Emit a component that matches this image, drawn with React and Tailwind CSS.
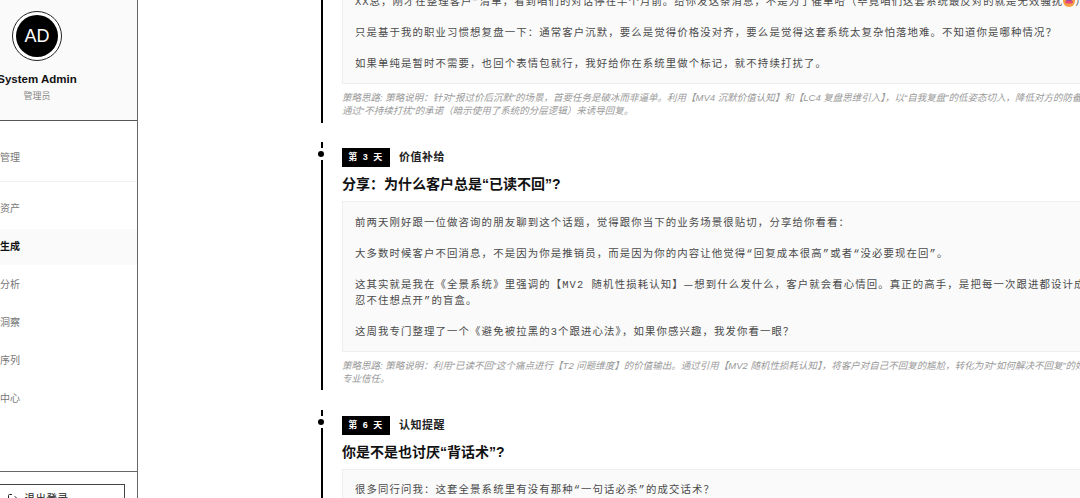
import React from "react";
import { LogOut } from "lucide-react";

const navItems = [
  { label: "内容生成", active: true },
  { label: "数据分析" },
  { label: "客户洞察" },
  { label: "跟进序列" },
  { label: "帮助中心" },
];

const days = [
  {
    day: 1,
    tag: "破冰唤醒",
    title: "好久没联系，想跟你复盘一下",
    body: [
      <span className="tracking-[1.05px]">
        XX总，刚才在整理客户”清单，看到咱们的对话停在半个月前。给你发这条消息，不是为了催单哈（毕竟咱们这套系统最反对的就是无效骚扰
        <Emoji />）
      </span>,
      "\n",
      "只是基于我的职业习惯想复盘一下：通常客户沉默，要么是觉得价格没对齐，要么是觉得这套系统太复杂怕落地难。不知道你是哪种情况？",
      "\n",
      "如果单纯是暂时不需要，也回个表情包就行，我好给你在系统里做个标记，就不持续打扰了。",
    ],
    note: [
      "策略思路: 策略说明：针对“报过价后沉默”的场景，首要任务是破冰而非逼单。利用【MV4 沉默价值认知】和【LC4 复盘思维引入】，以“自我复盘”的低姿态切入，降低对方的防备心，",
      "通过“不持续打扰”的承诺（暗示使用了系统的分层逻辑）来诱导回复。",
    ],
  },
  {
    day: 3,
    tag: "价值补给",
    title: "分享：为什么客户总是“已读不回”?",
    body: [
      "前两天刚好跟一位做咨询的朋友聊到这个话题，觉得跟你当下的业务场景很贴切，分享给你看看：",
      "\n",
      "大多数时候客户不回消息，不是因为你是推销员，而是因为你的内容让他觉得“回复成本很高”或者“没必要现在回”。",
      "\n",
      <>
        这其实就是我在《全景系统》里强调的【MV2 随机性损耗认知】
        <span className="font-['Noto_Sans_CJK_SC',sans-serif] leading-none">—</span>
        想到什么发什么，客户就会看心情回。真正的高手，是把每一次跟进都设计成“让人
      </>,
      "忍不住想点开”的盲盒。",
      "\n",
      "这周我专门整理了一个《避免被拉黑的3个跟进心法》，如果你感兴趣，我发你看一眼？",
    ],
    note: [
      "策略思路: 策略说明：利用“已读不回”这个痛点进行【T2 问题维度】的价值输出。通过引用【MV2 随机性损耗认知】，将客户对自己不回复的尴尬，转化为对“如何解决不回复”的好奇和",
      "专业信任。",
    ],
  },
  {
    day: 6,
    tag: "认知提醒",
    title: "你是不是也讨厌“背话术”?",
    body: [
      "很多同行问我：这套全景系统里有没有那种“一句话必杀”的成交话术？",
      "\n",
      "我的回答通常是：没有。",
    ],
    note: [],
  },
];

function Emoji() {
  return (
    <svg viewBox="0 0 12 12" className="inline-block h-[12px] w-[12px] align-[-2px]">
      <circle cx="6" cy="6" r="6" fill="#f59e42" />
      <path d="M0.6 4A6 6 0 0 1 11.4 4L6 7z" fill="#6d4bb5" />
      <ellipse cx="6" cy="7" rx="4" ry="1.6" fill="#e8457a" />
    </svg>
  );
}

function Sidebar() {
  return (
    <aside className="flex h-[526px] w-[200px] shrink-0 -ml-[62px] flex-col border-r border-[#666] bg-white">
      {/* user */}
      <div className="flex h-[121px] flex-col items-center border-b border-[#555] bg-[#fafafa] pt-[11px] pr-[1px]">
        <div className="rounded-full border border-[#222] bg-white p-[3px]">
          <div className="flex h-[42px] w-[42px] items-center justify-center rounded-full bg-black text-[18px] text-white">
            AD
          </div>
        </div>
        <div className="mt-[10px] text-[11.5px] leading-[16px] font-bold text-[#111]">System Admin</div>
        <div className="mt-[3px] text-[9px] leading-[12px] text-[#888]">管理员</div>
      </div>

      {/* nav */}
      <nav className="flex-1 pt-[18px] text-[10px] text-[#777]">
        <div className="flex h-[38px] items-center pl-[42px] leading-none">客户管理</div>
        <div className="mt-[4px] mb-[8px] border-b border-[#f2f2f2]" />
        <div className="flex h-[38px] items-center pl-[42px] leading-none">知识资产</div>
        {navItems.map((item) => (
          <div
            key={item.label}
            className={
              item.active
                ? "flex h-[36px] my-[1px] items-center bg-[#fafafa] pl-[42px] leading-none font-bold text-[#111]"
                : "flex h-[38px] items-center pl-[42px] leading-none"
            }
          >
            {item.label}
          </div>
        ))}
      </nav>

      {/* footer */}
      <div className="border-t border-[#666] px-[12px] pt-[12px] pb-[12px]">
        <button className="flex h-[30px] w-full items-center justify-center gap-[6px] border border-[#444] text-[10.5px] tracking-[0.5px] text-[#222]">
          <LogOut size={12} />
          退出登录
        </button>
      </div>
    </aside>
  );
}

function DayBlock({ item }) {
  return (
    <section className="relative border-l-2 border-black pt-[6px] pl-[19px] pb-[5px] mb-[19.5px]">
      {/* dot on the timeline */}
      <div className="absolute top-[6px] -left-[6px] h-[12px] w-[10px] bg-white" />
      <div className="absolute top-[9px] -left-[5px] h-[6px] w-[6px] rounded-full bg-black" />

      <div className="flex items-center gap-[9px]">
        <span className="flex h-[19px] w-[48px] items-center justify-center bg-black text-[9px] font-bold tracking-[1.5px] whitespace-pre text-white">
          第 {item.day} 天
        </span>
        <span className="text-[11px] font-bold tracking-[0.5px] text-[#222]">{item.tag}</span>
      </div>
      <h3 className="mt-[8px] text-[14px] leading-[18px] font-bold text-[#111]">{item.title}</h3>
      <div className="mt-[8px] w-[900px] border border-[#eeeeee] bg-[#fafafa] px-[12px] pt-[13.5px] pb-[10.5px] font-['Liberation_Mono','Noto_Sans_CJK_SC',monospace] text-[10.4px] leading-[15.6px] tracking-[1.12px] text-[#4a4a4a]">
        {item.body.map((line, i) => (
          <div key={i} className="whitespace-pre">
            {line}
          </div>
        ))}
      </div>
      {item.note.length > 0 && (
        <div className="mt-[7px] text-[9.5px] leading-[13.3px] whitespace-pre text-[#999] italic">
          {item.note.map((line, i) => (
            <div key={i}>{line}</div>
          ))}
        </div>
      )}
    </section>
  );
}

export default function App() {
  return (
    <div className="flex h-[498px] w-[1080px] overflow-hidden bg-white font-['Liberation_Sans','Noto_Sans_CJK_SC',sans-serif]">
      <Sidebar />
      <main className="min-w-0 flex-1 overflow-hidden pl-[183px]">
        <div className="-mt-[79px] w-[1200px]">
          {days.map((item) => (
            <DayBlock key={item.day} item={item} />
          ))}
        </div>
      </main>
    </div>
  );
}
